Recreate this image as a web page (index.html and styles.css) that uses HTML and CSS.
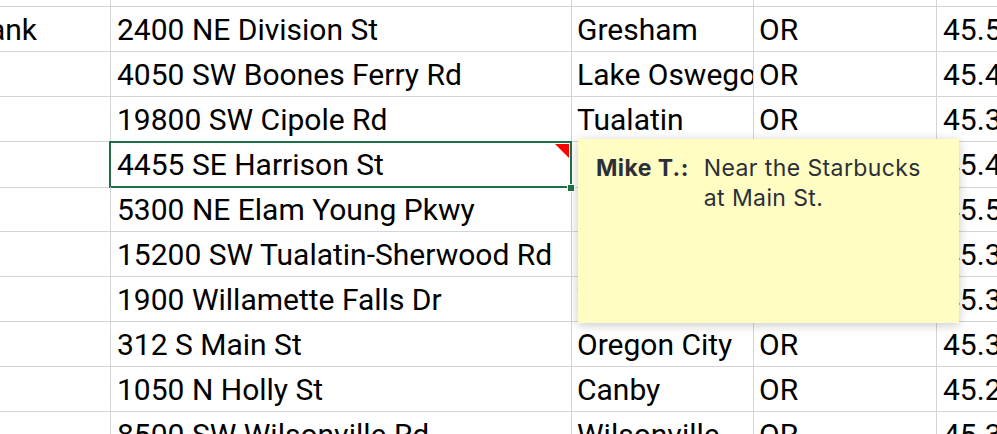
FILE: index.html
```html
<!DOCTYPE html>
<html>
<head>
<meta charset="utf-8">
<link rel="stylesheet" href="styles.css">
</head>
<body>
<div class="sheet">
  <div class="row top"><div class="c a"></div><div class="c b"></div><div class="c cc"></div><div class="c d"></div><div class="c e"></div></div>
  <div class="row"><div class="c a right"><span>Food Bank</span></div><div class="c b">2400 NE Division St</div><div class="c cc">Gresham</div><div class="c d">OR</div><div class="c e">45.5</div></div>
  <div class="row"><div class="c a"></div><div class="c b">4050 SW Boones Ferry Rd</div><div class="c cc">Lake Oswego</div><div class="c d">OR</div><div class="c e">45.4</div></div>
  <div class="row"><div class="c a"></div><div class="c b">19800 SW Cipole Rd</div><div class="c cc">Tualatin</div><div class="c d">OR</div><div class="c e">45.3</div></div>
  <div class="row"><div class="c a"></div><div class="c b sel">4455 SE Harrison St<span class="selbox"></span><span class="note-mark"></span><span class="handle"></span></div><div class="c cc">Milwaukie</div><div class="c d">OR</div><div class="c e">45.4</div></div>
  <div class="row"><div class="c a"></div><div class="c b">5300 NE Elam Young Pkwy</div><div class="c cc">Hillsboro</div><div class="c d">OR</div><div class="c e">45.5</div></div>
  <div class="row"><div class="c a"></div><div class="c b">15200 SW Tualatin-Sherwood Rd</div><div class="c cc">Sherwood</div><div class="c d">OR</div><div class="c e">45.3</div></div>
  <div class="row"><div class="c a"></div><div class="c b">1900 Willamette Falls Dr</div><div class="c cc">West Linn</div><div class="c d">OR</div><div class="c e">45.3</div></div>
  <div class="row"><div class="c a"></div><div class="c b">312 S Main St</div><div class="c cc">Oregon City</div><div class="c d">OR</div><div class="c e">45.3</div></div>
  <div class="row"><div class="c a"></div><div class="c b">1050 N Holly St</div><div class="c cc">Canby</div><div class="c d">OR</div><div class="c e">45.2</div></div>
  <div class="row"><div class="c a"></div><div class="c b">8500 SW Wilsonville Rd</div><div class="c cc">Wilsonville</div><div class="c d">OR</div><div class="c e">45.3</div></div>
</div>
<div class="comment">
  <span class="author">Mike T.:</span>
  <span class="text">Near the Starbucks<br>at Main St.</span>
</div>
</body>
</html>
```
FILE: styles.css
```css
html, body {
  margin: 0;
  padding: 0;
  background: #ffffff;
  overflow: hidden;
  width: 997px;
  height: 434px;
}
.sheet {
  display: flex;
  flex-direction: column;
  font-family: Roboto, "Liberation Sans", sans-serif;
  font-size: 30px;
  color: #000;
}
.row {
  display: grid;
  grid-template-columns: 111px 461px 182px 183px 200px;
  height: 45px;
  flex: none;
}
.row.top {
  height: 7px;
}
.c {
  box-sizing: border-box;
  border-right: 1px solid #d4d4d4;
  border-bottom: 1px solid #d4d4d4;
  height: 100%;
  line-height: 44px;
  padding: 1px 0 0 5px;
  white-space: nowrap;
  overflow: hidden;
  position: relative;
}
.c.b { padding-left: 6px; }
.c.e { padding-left: 6px; border-right: none; }
.c.right {
  display: flex;
  justify-content: flex-end;
  padding-right: 73px;
}
.c.sel { overflow: visible; }
.selbox {
  position: absolute;
  left: -2px;
  top: -1px;
  right: -1px;
  bottom: -1px;
  border: 2px solid #1e7145;
  pointer-events: none;
}
.note-mark {
  position: absolute;
  right: 2px;
  top: 2px;
  width: 0;
  height: 0;
  border-top: 14px solid #ff0000;
  border-left: 14px solid transparent;
}
.handle {
  position: absolute;
  right: -4px;
  bottom: -5px;
  width: 6px;
  height: 6px;
  background: #1e7145;
  border: 1px solid #fff;
  z-index: 2;
}
.comment {
  position: absolute;
  left: 578px;
  top: 139px;
  width: 381px;
  height: 184px;
  box-sizing: border-box;
  background: #fffdc2;
  box-shadow: 0 2px 10px rgba(0, 0, 0, 0.22);
  display: flex;
  gap: 15px;
  padding: 14px 0 0 18px;
  font-family: Inter, "Noto Sans", sans-serif;
  font-size: 23px;
  letter-spacing: 0.4px;
  line-height: 30px;
  color: #2b2f38;
  z-index: 3;
}
.author {
  font-weight: 700;
}
```
